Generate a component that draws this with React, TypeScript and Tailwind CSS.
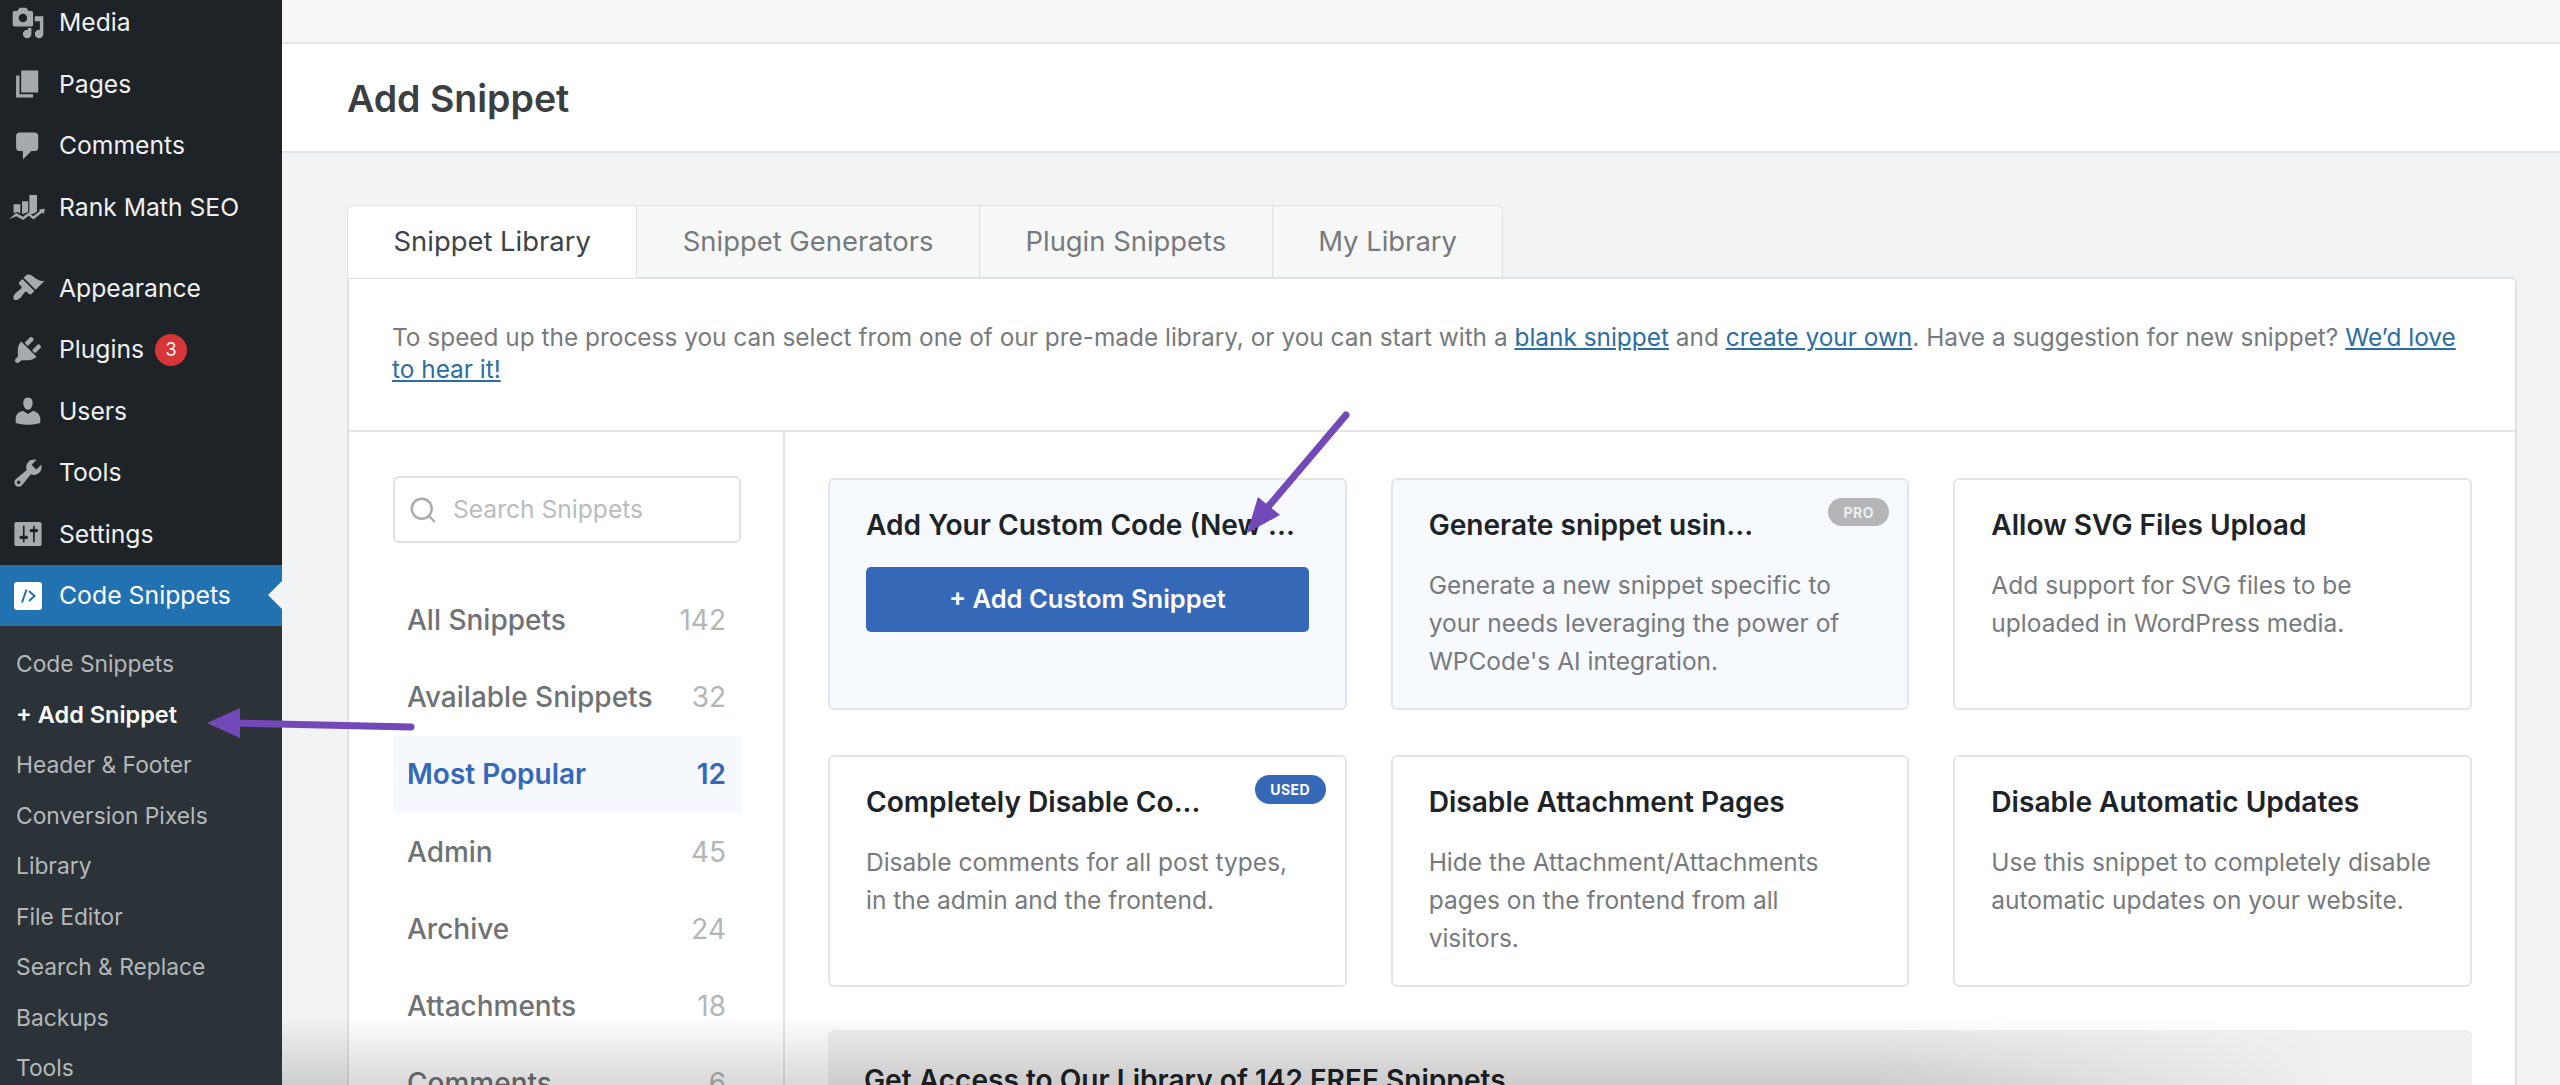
import React from 'react';
import { Search } from 'lucide-react';

const icons: Record<string, string> = {
  media:
    'M13 11V4c0-.55-.45-1-1-1h-1.67L9 1H5L3.67 3H2c-.55 0-1 .45-1 1v7c0 .55.45 1 1 1h10c.55 0 1-.45 1-1zM7 4.5c1.38 0 2.5 1.12 2.5 2.5S8.38 9.5 7 9.5 4.5 8.38 4.5 7 5.62 4.5 7 4.5zM14 6h5v10.5c0 1.38-1.12 2.5-2.5 2.5S14 17.88 14 16.5s1.12-2.5 2.5-2.5c.17 0 .34.02.5.05V9h-3V6zm-4 8.05V13h2v3.5c0 1.38-1.12 2.5-2.5 2.5S7 17.88 7 16.5 8.12 14 9.5 14c.17 0 .34.02.5.05z',
  pages: 'M6 15V2h10v13H6zm-1 1h8v2H3V5h2v11z',
  comments: 'M5 2h9c1.1 0 2 .9 2 2v7c0 1.1-.9 2-2 2h-2l-5 5v-5H5c-1.1 0-2-.9-2-2V4c0-1.1.9-2 2-2z',
  rank: 'M1.5 13.6V8.4h4v5.4l-1.6-.9zM6.5 14.2V6.6h3.6v6.3zM10.8 14.2V3h4.5v9.6l-2 1.4zM-1.2 17.2 3 13.6l4 2.2 3.5-2.6 2.6 2.2 4-3.2-.8-.8 3.6-.4-.6 3.2-.9-.9-5.2 4.1-2.7-2.3-3.4 2.5-4-2.2z',
  appearance:
    'M14.48 11.06L7.41 3.99l1.5-1.5c.5-.56 2.3-.47 3.51.32 1.21.8 1.43 1.28 2.91 2.1 1.18.64 2.45 1.26 4.45.85zm-.71.71L6.7 4.7 4.93 6.47c-.39.39-.39 1.02 0 1.41l1.06 1.06c.39.39.39 1.03 0 1.42-.6.6-1.43 1.11-2.21 1.69-.35.26-.7.53-1.01.84-1.34 1.34-1.79 3.05-1.01 3.83.78.78 2.49.33 3.83-1.01.31-.31.58-.66.84-1.01.58-.78 1.09-1.61 1.69-2.21.39-.39 1.03-.39 1.42 0l1.06 1.06c.39.39 1.02.39 1.41 0l1.77-1.77z',
  plugins:
    'M13.11 4.36L9.87 7.6 8 5.73l3.24-3.24c.35-.34 1.05-.2 1.56.32.52.51.66 1.21.31 1.55zm-8 1.77l.91-1.12 9.01 9.01-1.19.84c-.71.71-2.63 1.16-3.82 1.16H6.14L4.9 17.26c-.59.59-1.54.59-2.12 0-.59-.58-.59-1.53 0-2.12l1.24-1.24v-3.88c0-1.13.4-3.19 1.09-3.89zm7.26 3.97l3.24-3.24c.34-.35 1.04-.21 1.55.31.52.51.66 1.21.31 1.55l-3.24 3.25z',
  users:
    'M10 9.25c-2.27 0-2.73-3.44-2.73-3.44C7 4.02 7.82 2 9.97 2c2.16 0 2.98 2.02 2.71 3.81 0 0-.41 3.44-2.68 3.44zm0 2.57L12.72 10c2.39 0 4.52 2.33 4.52 4.53v2.49s-3.65 1.13-7.24 1.13c-3.65 0-7.24-1.13-7.24-1.13v-2.49c0-2.25 1.94-4.48 4.47-4.48z',
  tools:
    'M16.68 9.77c-1.34 1.34-3.3 1.67-4.95.99l-5.41 6.52c-.99.99-2.59.99-3.58 0s-.99-2.59 0-3.57l6.52-5.42c-.68-1.65-.35-3.61.99-4.95 1.28-1.28 3.12-1.62 4.72-1.06l-2.89 2.89 2.82 2.82 2.86-2.87c.53 1.58.18 3.39-1.08 4.67zM3.81 16.21c.4.39 1.04.39 1.43 0 .4-.4.4-1.04 0-1.43-.39-.4-1.03-.4-1.43 0-.39.39-.39 1.03 0 1.43z',
  settings:
    'M18 16V4c0-.55-.45-1-1-1H3c-.55 0-1 .45-1 1v12c0 .55.45 1 1 1h14c.55 0 1-.45 1-1zM8 11h1c.55 0 1 .45 1 1s-.45 1-1 1H8v1.5c0 .28-.22.5-.5.5s-.5-.22-.5-.5V13H6c-.55 0-1-.45-1-1s.45-1 1-1h1V5.5c0-.28.22-.5.5-.5s.5.22.5.5V11zm5-2h-1c-.55 0-1-.45-1-1s.45-1 1-1h1V5.5c0-.28.22-.5.5-.5s.5.22.5.5V7h1c.55 0 1 .45 1 1s-.45 1-1 1h-1v5.5c0 .28-.22.5-.5.5s-.5-.22-.5-.5V9z',
};

const MenuIcon = ({ name }: { name: string }) => (
  <svg viewBox="0 0 20 20" className="w-[34px] h-[34px] shrink-0 fill-[#a7aaad] overflow-visible">
    <path d={icons[name]} />
  </svg>
);

const MenuItem = ({ icon, label, badge }: { icon: string; label: string; badge?: string }) => (
  <div className="flex items-center h-[61.5px] pl-[11px] gap-[14px]">
    <MenuIcon name={icon} />
    <span className="text-[24.7px] text-[#f0f0f1]">{label}</span>
    {badge && (
      <span className="flex items-center justify-center w-[32px] h-[32px] -ml-[3px] rounded-full bg-[#d63638] text-[18px] text-white">
        {badge}
      </span>
    )}
  </div>
);

const subItems = [
  'Code Snippets',
  '+ Add Snippet',
  'Header & Footer',
  'Conversion Pixels',
  'Library',
  'File Editor',
  'Search & Replace',
  'Backups',
  'Tools',
];

const Sidebar = () => (
  <aside className="flex flex-col w-[282px] shrink-0 bg-[#1d2327] h-[1085px] overflow-hidden">
    <div className="-mt-[8px]">
      <MenuItem icon="media" label="Media" />
      <MenuItem icon="pages" label="Pages" />
      <MenuItem icon="comments" label="Comments" />
      <MenuItem icon="rank" label="Rank Math SEO" />
    </div>
    <div className="mt-[19.5px]">
      <MenuItem icon="appearance" label="Appearance" />
      <MenuItem icon="plugins" label="Plugins" badge="3" />
      <MenuItem icon="users" label="Users" />
      <MenuItem icon="tools" label="Tools" />
      <MenuItem icon="settings" label="Settings" />
    </div>
    <div className="relative flex items-center h-[61px] shrink-0 pl-[14px] gap-[17px] bg-[#2271b1]">
      <div className="flex items-center justify-center w-[28px] h-[28px] rounded-[3px] bg-white">
        <svg viewBox="0 0 20 20" className="w-[20px] h-[20px] fill-none stroke-[#2271b1] stroke-[2]">
          <path d="M8.5 3.5 4 16.5" />
          <path d="m11 5 5.5 5-5.5 5" />
        </svg>
      </div>
      <span className="text-[24.8px] text-white">Code Snippets</span>
      <div className="absolute right-0 top-[16px] w-0 h-0 border-y-[14px] border-y-transparent border-r-[14px] border-r-[#f2f3f5]" />
    </div>
    <div className="flex-1 bg-[#2c3338] pt-[13px]">
      {subItems.map((item) => (
        <div
          key={item}
          className={
            item === '+ Add Snippet'
              ? 'flex items-center h-[50.5px] pl-[16px] text-[23.5px] font-semibold text-white'
              : 'flex items-center h-[50.5px] pl-[16px] text-[22.8px] text-[#b5b8ba]'
          }
        >
          {item}
        </div>
      ))}
    </div>
  </aside>
);

const tabs = ['Snippet Library', 'Snippet Generators', 'Plugin Snippets', 'My Library'];

const TabBar = () => (
  <div className="relative z-10 flex h-[73px] -mb-px">
    {tabs.map((tab, i) => (
      <div
        key={tab}
        className={
          i === 0
            ? 'flex items-center px-[45.5px] text-[27.4px] text-[#3c434a] bg-white border border-[#dfe1e4] border-b-white rounded-tl-[6px]'
            : i === 3
              ? 'flex items-center px-[45.5px] text-[27.4px] text-[#777a7d] bg-[#f6f7f7] border border-l-0 border-[#dfe1e4] rounded-tr-[6px]'
              : 'flex items-center px-[45.5px] text-[27.4px] text-[#777a7d] bg-[#f6f7f7] border border-l-0 border-[#dfe1e4]'
        }
      >
        {tab}
      </div>
    ))}
  </div>
);

const categories = [
  { name: 'All Snippets', count: 142 },
  { name: 'Available Snippets', count: 32 },
  { name: 'Most Popular', count: 12, active: true },
  { name: 'Admin', count: 45 },
  { name: 'Archive', count: 24 },
  { name: 'Attachments', count: 18 },
  { name: 'Comments', count: 6 },
];

const Categories = () => (
  <div className="w-[436px] shrink-0 border-r-2 border-[#e4e5e7] pt-[44px] pl-[44px] pr-[42px]">
    <div className="flex items-center h-[67px] gap-[15px] pl-[13px] pr-[15px] border-2 border-[#dfe1e4] rounded-[6px]">
      <Search className="w-[30px] h-[30px] text-[#a9abad]" strokeWidth={1.9} />
      <span className="text-[24.6px] text-[#b9bbbd]">Search Snippets</span>
    </div>
    <div className="mt-[38px]">
      {categories.map((c) => (
        <div
          key={c.name}
          className={
            c.active
              ? 'flex items-center justify-between h-[77.3px] pl-[14px] pr-[15px] bg-[#f5f8fd] font-semibold text-[28px] text-[#3568b7]'
              : 'flex items-center justify-between h-[77.3px] pl-[14px] pr-[15px] font-medium text-[28px] text-[#6f7275]'
          }
        >
          <span>{c.name}</span>
          <span className={c.active ? 'text-[#3568b7]' : 'font-normal text-[#b3b5b7]'}>{c.count}</span>
        </div>
      ))}
    </div>
  </div>
);

type CardProps = {
  title: string;
  desc?: string;
  tint?: boolean;
  badge?: 'PRO' | 'USED';
  children?: React.ReactNode;
};

const SnippetCard = ({ title, desc, tint, badge, children }: CardProps) => (
  <div
    className={
      tint
        ? 'relative h-[232px] px-[36px] pt-[25px] border-2 border-[#e3e5e8] rounded-[6px] bg-[#f6f9fd]'
        : 'relative h-[232px] px-[36px] pt-[25px] border-2 border-[#e3e5e8] rounded-[6px] bg-white'
    }
  >
    {badge === 'PRO' && (
      <span className="absolute top-[18px] right-[18px] flex items-center justify-center w-[61px] h-[28px] rounded-full bg-[#b4b5b7] text-[14px] font-bold tracking-[0.5px] text-[#eeeeee]">
        PRO
      </span>
    )}
    {badge === 'USED' && (
      <span className="absolute top-[18px] right-[19px] flex items-center justify-center w-[71px] h-[29px] rounded-full bg-[#3568b7] text-[14px] font-bold tracking-[0.5px] text-white">
        USED
      </span>
    )}
    <h3 className="text-[28.1px] leading-[40px] font-semibold text-[#1d2327] whitespace-nowrap">{title}</h3>
    {desc && <p className="mt-[21px] text-[24.5px] leading-[38px] text-[#777a7d] whitespace-pre">{desc}</p>}
    {children}
  </div>
);

const Cards = () => (
  <div className="flex-1 min-w-0 pt-[46px] pl-[43px] pr-[43px]">
    <div className="grid grid-cols-3 gap-x-[44px] gap-y-[45px]">
      <SnippetCard title="Add Your Custom Code (New ..." tint>
        <div className="flex items-center justify-center h-[65px] mt-[22px] rounded-[5px] bg-[#3568b7] text-[25.5px] font-semibold text-white">
          + Add Custom Snippet
        </div>
      </SnippetCard>
      <SnippetCard
        title="Generate snippet usin..."
        tint
        badge="PRO"
        desc={"Generate a new snippet specific to\nyour needs leveraging the power of\nWPCode's AI integration."}
      />
      <SnippetCard title="Allow SVG Files Upload" desc={'Add support for SVG files to be\nuploaded in WordPress media.'} />
      <SnippetCard
        title="Completely Disable Co..."
        badge="USED"
        desc={'Disable comments for all post types,\nin the admin and the frontend.'}
      />
      <SnippetCard
        title="Disable Attachment Pages"
        desc={'Hide the Attachment/Attachments\npages on the frontend from all\nvisitors.'}
      />
      <SnippetCard
        title="Disable Automatic Updates"
        desc={'Use this snippet to completely disable\nautomatic updates on your website.'}
      />
    </div>
    <div className="mt-[43px] h-[120px] px-[36px] pt-[30px] rounded-[6px] bg-[#f0f0f1]">
      <h3 className="text-[28.1px] leading-[40px] font-semibold text-[#1d2327]">
        Get Access to Our Library of 142 FREE Snippets
      </h3>
    </div>
  </div>
);

const Annotations = () => (
  <svg className="absolute inset-0 w-[2560px] h-[1085px] pointer-events-none" viewBox="0 0 2560 1085">
    <path d="M411 727 236 723" fill="none" stroke="#7348b8" strokeWidth="7" strokeLinecap="round" />
    <path d="M207 723 240 708 240 738z" fill="#7348b8" />
    <path d="M1346 415 1262 514" fill="none" stroke="#7348b8" strokeWidth="7" strokeLinecap="round" />
    <path d="M1247 533 1258 497 1280 515z" fill="#7348b8" />
  </svg>
);

export default function App() {
  return (
    <div className="relative flex w-[2560px] h-[1085px] overflow-hidden bg-[#f2f3f5] font-[Inter,sans-serif]">
      <Sidebar />
      <main className="relative flex-1 min-w-0 flex flex-col">
        <div className="h-[44px] shrink-0 bg-[#f6f7f7] border-b-2 border-[#e3e4e6]" />
        <div className="flex items-center h-[109px] shrink-0 pl-[65px] pt-[4px] bg-white border-b-2 border-[#e3e4e6]">
          <h1 className="text-[37.5px] font-semibold text-[#3c3f42]">Add Snippet</h1>
        </div>
        <div className="flex-1 min-h-0 pt-[52px] pl-[65px] pr-[43px]">
          <TabBar />
          <div className="bg-white border-2 border-[#dfe1e4] rounded-r-[6px]">
            <div className="h-[153px] pt-[42px] pl-[43px] pr-[40px] border-b-2 border-[#e4e5e7] text-[24.4px] leading-[32px] text-[#777a7d]">
              To speed up the process you can select from one of our pre-made library, or you can start with a{' '}
              <a className="underline text-[#2b6ea5]">blank snippet</a> and{' '}
              <a className="underline text-[#2b6ea5]">create your own</a>. Have a suggestion for new snippet?{' '}
              <a className="underline text-[#2b6ea5]">We’d love to hear it!</a>
            </div>
            <div className="flex">
              <Categories />
              <Cards />
            </div>
          </div>
        </div>
        <div className="absolute left-0 right-0 bottom-0 h-[70px] bg-gradient-to-t from-black/15 to-transparent [mask-image:linear-gradient(to_right,black_70%,transparent_90%)]" />
      </main>
      <Annotations />
    </div>
  );
}
